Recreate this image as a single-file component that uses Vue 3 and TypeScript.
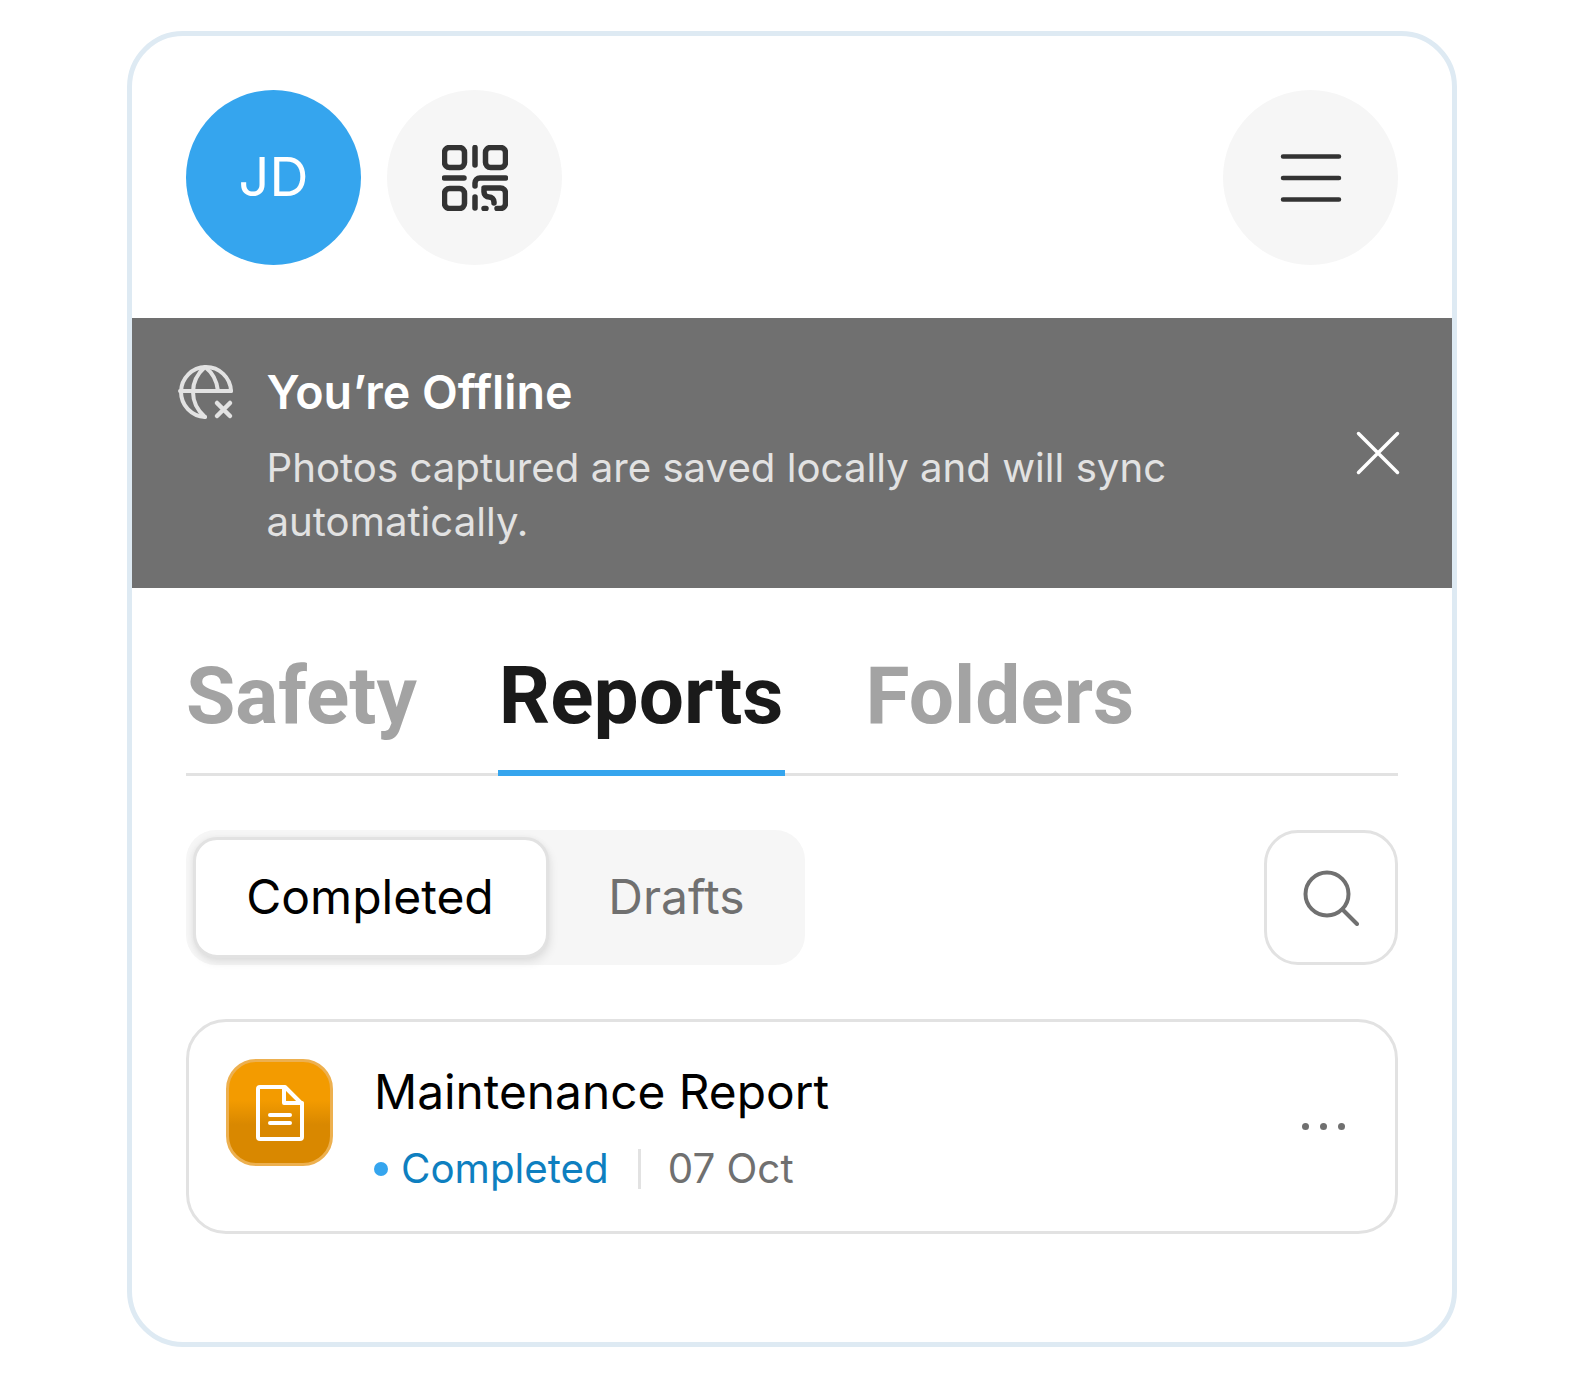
<template>
  <div class="frame">
    <header class="top">
      <div class="avatar">JD</div>
      <button class="round">
        <svg width="66" height="66" viewBox="0 0 66 66" fill="none" stroke="#333" stroke-width="5.500" stroke-linecap="round" stroke-linejoin="round">
          <rect x="2.500" y="2.500" width="20" height="20" rx="5" />
          <rect x="43.500" y="2.500" width="20" height="20" rx="5" />
          <rect x="2.500" y="43.500" width="20" height="20" rx="5" />
          <path d="M33 2.500V20M2.500 33H22M63.500 33H38a5 5 0 0 0-5 5v3M33 52v11" />
          <path d="M42 43h16.500a5 5 0 0 1 5 5v10.500a5 5 0 0 1-5 5H55M42 44v3a5 5 0 0 0 5 5a5 5 0 0 1 5 5v1M42 63.500h2" />
        </svg>
      </button>
      <button class="round menu">
        <svg width="62" height="48" viewBox="0 0 62 48" fill="none" stroke="#333" stroke-width="4.500" stroke-linecap="round">
          <path d="M3 2.500h56M3 24h56M3 45.500h56" />
        </svg>
      </button>
    </header>

    <section class="banner">
      <svg class="globe" width="56" height="56" viewBox="0 0 56 56" fill="none" stroke="#e2e2e2" stroke-width="4" stroke-linecap="round" stroke-linejoin="round">
        <path d="M53 26A25 25 0 1 0 27 52" />
        <path d="M27 2C19 9 15 18 15 27s4 18 12 25M27 2c8 6 12 14 13 24M2 26h51" />
        <path stroke-width="4.500" d="M39 38l13 13M52 38L39 51" />
      </svg>
      <div class="banner-text">
        <h2>You’re Offline</h2>
        <p>Photos captured are saved locally and will sync automatically.</p>
      </div>
      <svg class="close" width="44" height="44" viewBox="0 0 44 44" fill="none" stroke="#fff" stroke-width="3.500" stroke-linecap="round">
        <path d="M2.500 2.500l39 39M41.500 2.500l-39 39" />
      </svg>
    </section>

    <main class="content">
      <nav class="tabs">
        <span v-for="tab in tabs" :key="tab" class="tab" :class="{ active: tab === activeTab }">{{ tab }}</span>
      </nav>

      <div class="filters">
        <div class="segment">
          <div class="seg-item on">Completed</div>
          <div class="seg-item">Drafts</div>
        </div>
        <button class="search">
          <svg width="56" height="56" viewBox="0 0 56 56" fill="none" stroke="#707070" stroke-width="4" stroke-linecap="round">
            <circle cx="24" cy="24" r="21.500" />
            <path d="M39.500 39.500L54 54" />
          </svg>
        </button>
      </div>

      <article class="card">
        <div class="file-icon">
          <svg width="48" height="56" viewBox="0 0 48 56" fill="none" stroke="#fff" stroke-width="4" stroke-linejoin="round" stroke-linecap="round">
            <path d="M29 2H4a2 2 0 0 0-2 2v48a2 2 0 0 0 2 2h40a2 2 0 0 0 2-2V19z" />
            <path d="M28 2v16h18" />
            <path d="M14 30h20M14 38h20" />
          </svg>
        </div>
        <div class="info">
          <h3>Maintenance Report</h3>
          <div class="meta">
            <span class="dot"></span>
            <span class="status">Completed</span>
            <span class="sep"></span>
            <span class="date">07 Oct</span>
          </div>
        </div>
        <div class="more"><i></i><i></i><i></i></div>
      </article>
    </main>
  </div>
</template>

<script setup lang="ts">
const tabs: string[] = ['Safety', 'Reports', 'Folders']
const activeTab = 'Reports'
</script>

<style>
body {
  background: #fff;
}
</style>

<style scoped>
.frame {
  box-sizing: border-box;
  width: 1330px;
  height: 1316px;
  margin: 31px 0 0 127px;
  border: 5px solid #deeaf3;
  border-radius: 56px;
  background: #fff;
  overflow: hidden;
  font-family: Inter, "Liberation Sans", sans-serif;
}

.top {
  display: flex;
  align-items: center;
  gap: 26px;
  padding: 54px 54px 53px;
}

.avatar,
.round {
  width: 175px;
  height: 175px;
  border-radius: 50%;
  border: 0;
  padding: 0;
  display: flex;
  align-items: center;
  justify-content: center;
  flex-shrink: 0;
}

.avatar {
  box-sizing: border-box;
  padding-bottom: 2px;
  background: #35a5ee;
  color: #fff;
  font-size: 54px;
  font-weight: 400;
}

.round {
  background: #f6f6f6;
}

.menu {
  margin-left: auto;
}

.banner {
  display: flex;
  align-items: flex-start;
  height: 270px;
  box-sizing: border-box;
  padding: 47px 0 0 46px;
  background: #707070;
  position: relative;
}

.globe {
  flex-shrink: 0;
  margin-right: 32.500px;
}

.banner-text {
  width: 960px;
}

.banner h2 {
  margin: 0;
  font-size: 46.600px;
  line-height: 54px;
  font-weight: 600;
  color: #fff;
}

.banner p {
  margin: 22px 0 0;
  font-size: 40.200px;
  line-height: 54px;
  color: #e2e2e2;
}

.close {
  position: absolute;
  right: 52px;
  top: 113px;
}

.content {
  padding: 0 54px;
}

.tabs {
  display: flex;
  gap: 81px;
  height: 188px;
  box-sizing: border-box;
  border-bottom: 3px solid #e2e2e2;
}

.tab {
  box-sizing: border-box;
  height: 188px;
  padding-top: 58px;
  font-family: Roboto, sans-serif;
  font-size: 80.200px;
  line-height: 100px;
  font-weight: 700;
  color: #a3a3a3;
}

.tab.active {
  padding-left: 1px;
  padding-right: 1px;
  color: #1a1a1a;
  border-bottom: 6px solid #35a5ee;
}

.filters {
  display: flex;
  justify-content: space-between;
  margin-top: 54px;
}

.segment {
  display: flex;
  width: 619px;
  height: 135px;
  padding: 7px;
  box-sizing: border-box;
  border-radius: 30px;
  background: #f6f6f6;
}

.seg-item {
  display: flex;
  align-items: center;
  justify-content: center;
  font-size: 48px;
  color: #707070;
  flex: 1;
  padding: 0 0 2px 6px;
}

.seg-item.on {
  flex: none;
  width: 356px;
  box-sizing: border-box;
  padding: 0 2px 2px 0;
  background: #fff;
  color: #000;
  border: 3px solid #e2e2e2;
  border-radius: 24px;
  box-shadow: 2px 5px 8px rgba(0, 0, 0, 0.08), -1px 0 6px rgba(0, 0, 0, 0.05);
}

.search {
  box-sizing: border-box;
  width: 134px;
  height: 135px;
  border: 3px solid #e2e2e2;
  border-radius: 34px;
  background: #fff;
  padding: 0;
  display: flex;
  align-items: center;
  justify-content: center;
}

.card {
  display: flex;
  align-items: flex-start;
  box-sizing: border-box;
  height: 215px;
  margin-top: 54px;
  padding: 37px 50px 0 37px;
  border: 3px solid #e2e2e2;
  border-radius: 40px;
}

.file-icon {
  box-sizing: border-box;
  width: 107px;
  height: 107px;
  border: 3px solid #edb04f;
  border-radius: 30px;
  background: linear-gradient(180deg, #f39b00 38%, #d98800 62%);
  display: flex;
  align-items: center;
  justify-content: center;
  flex-shrink: 0;
}

.info {
  margin: 5px 0 0 41px;
}

.info h3 {
  margin: 0;
  font-size: 47.800px;
  line-height: 56px;
  font-weight: 400;
  color: #000;
}

.meta {
  display: flex;
  align-items: center;
  margin-top: 25px;
  font-size: 40.300px;
  line-height: 48px;
}

.dot {
  width: 14px;
  height: 14px;
  border-radius: 50%;
  background: #35a5ee;
  margin-right: 13px;
}

.status {
  color: #0e7fc0;
}

.sep {
  width: 3px;
  height: 40px;
  background: #e2e2e2;
  margin: 0 27px 0 29px;
}

.date {
  color: #707070;
}

.more {
  margin-left: auto;
  margin-top: 64px;
  display: flex;
  gap: 11px;
}

.more i {
  width: 7px;
  height: 7px;
  border-radius: 50%;
  background: #707070;
}
</style>
